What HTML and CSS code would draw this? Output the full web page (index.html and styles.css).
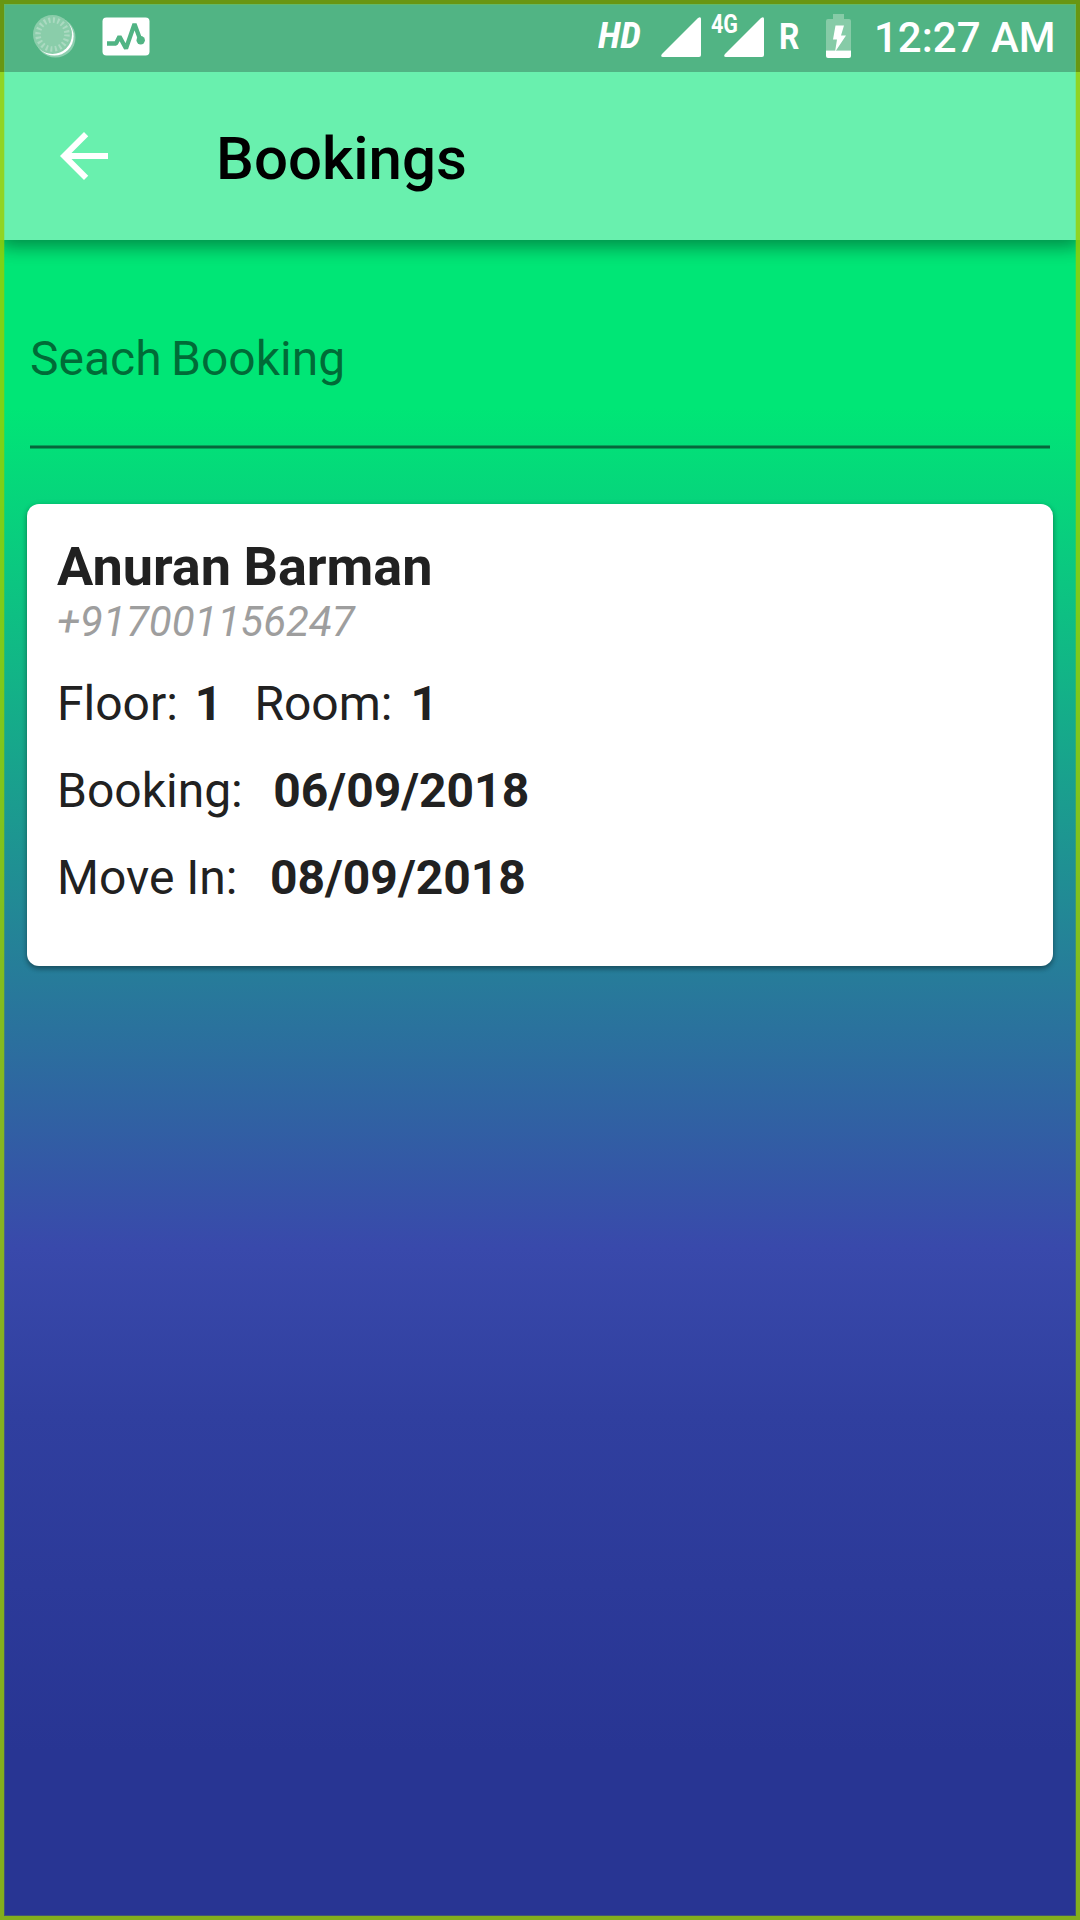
FILE: index.html
```html
<!DOCTYPE html>
<html lang="en">
<head>
<meta charset="utf-8">
<title>Bookings</title>
<link rel="stylesheet" href="styles.css">
</head>
<body>
<div class="screen">
  <header class="top">
    <div class="status">
      <svg class="sync" width="44" height="46" viewBox="0 0 44 46">
        <circle cx="22.500" cy="23.500" r="20" fill="#fff" fill-opacity=".35"/>
        <circle cx="21.300" cy="22.300" r="19.300" fill="#fff"/>
        <circle cx="19.500" cy="20.500" r="19.500" fill="#8acdaa"/>
        <circle cx="19.500" cy="20.500" r="14.500" fill="none" stroke="#abdac1" stroke-width="5.500" stroke-dasharray="2 2.555"/>
      </svg>
      <svg class="pulse" width="48" height="39" viewBox="0 0 48 39">
        <rect x=".5" y=".5" width="47" height="38" rx="4" fill="#fff"/>
        <path d="M5 26.500H14L17.500 19.500L24 31.500L32.500 7L38 22" fill="none" stroke="#51b484" stroke-width="4.300" stroke-linejoin="bevel"/>
        <circle cx="38.700" cy="23.300" r="4.200" fill="#51b484"/>
      </svg>
      <span class="hd">HD</span>
      <svg class="signal" width="40" height="40" viewBox="0 0 40 40"><path d="M2 40H38Q40 40 40 38V2Q40-1 37 1L1 37Q-1 40 2 40Z" fill="#fff"/></svg>
      <div class="mobile">
        <svg class="signal" width="40" height="40" viewBox="0 0 40 40"><path d="M2 40H38Q40 40 40 38V2Q40-1 37 1L1 37Q-1 40 2 40Z" fill="#fff"/></svg>
        <span class="network">4G</span>
      </div>
      <span class="roaming">R</span>
      <svg class="battery" width="25" height="44" viewBox="0 0 25 44">
        <path d="M7 0H18V5H23Q25 5 25 7V36.500H0V7Q0 5 2 5H7Z" fill="#86cba7"/>
        <path d="M0 36.500H25V42Q25 44 23 44H2Q0 44 0 42Z" fill="#fff"/>
        <path d="M9.500 11.500H18L15 21.500H20L9 38L11 25.500H7Z" fill="#fff"/>
      </svg>
      <time class="clock">12:27 AM</time>
    </div>
    <div class="appbar">
      <svg class="back" width="48" height="48" viewBox="4 4 16 16"><path d="M20 11H7.830l5.590-5.590L12 4l-8 8 8 8 1.410-1.410L7.830 13H20v-2z" fill="#fff"/></svg>
      <h1 class="title">Bookings</h1>
    </div>
  </header>
  <main class="content">
    <div class="search">Seach Booking</div>
    <article class="card">
      <h2 class="name">Anuran Barman</h2>
      <p class="phone">+917001156247</p>
      <p class="row"><span>Floor:</span><b class="floor">1</b><span class="room-label">Room:</span><b class="room">1</b></p>
      <p class="row"><span>Booking:</span><b class="booked">06/09/2018</b></p>
      <p class="row"><span>Move In:</span><b class="move-in">08/09/2018</b></p>
    </article>
  </main>
  <div class="frame"></div>
</div>
</body>
</html>
```
FILE: styles.css
```css
*, *::before { box-sizing: border-box; }
body { margin: 0; font-family: Roboto, sans-serif; color: #212121; }
h1, h2, p { margin: 0; }
.screen {
  position: relative;
  width: 1080px;
  height: 1920px;
  overflow: hidden;
  background: linear-gradient(#00e676 0, #00e676 408px, #3949ab 1248px, #303f9f 1416px, #283593 1752px);
}
.top {
  background: #69f0ae;
  height: 240px;
  box-shadow: 0 7px 17px rgba(0, 0, 0, .28), 0 3px 20px rgba(0, 0, 0, .18);
}
.status {
  display: flex;
  height: 72px;
  background: #51b484;
  color: #fff;
}
.status svg { display: block; flex: none; }
.sync { margin: 14px 0 0 33px; }
.pulse { margin: 17px 0 0 25px; }
.hd {
  width: 46px;
  margin: 15px 0 0 448px;
  font: italic 700 36px/42px "Roboto Condensed", Roboto, sans-serif;
  transform: scaleX(1.04);
  transform-origin: left;
}
.signal { margin-top: 17px; }
.hd + .signal { margin-left: 17px; }
.mobile { position: relative; margin-left: 23px; }
.network {
  position: absolute;
  left: -13px;
  top: 13px;
  font: 700 25px/24px Roboto, sans-serif;
  transform: scaleX(.86);
  transform-origin: left;
}
.roaming {
  width: 24px;
  margin: 16px 0 0 15px;
  font: 700 37px/42px Roboto, sans-serif;
  transform: scaleX(.86);
  transform-origin: left;
}
.battery { margin: 14px 0 0 23px; }
.clock {
  margin: 13px 0 0 23px;
  font-size: 42px;
  line-height: 50px;
  font-weight: 500;
  white-space: nowrap;
}
.appbar {
  display: flex;
  align-items: center;
  height: 168px;
  padding-left: 60px;
}
.title {
  margin-left: 108px;
  padding-top: 6px;
  font-size: 60px;
  line-height: 70px;
  font-weight: 500;
  color: #000;
}
.content { padding: 0 27px; }
.search {
  height: 209px;
  margin: 0 3px 55px;
  padding-top: 91px;
  font-size: 48px;
  line-height: 56px;
  word-spacing: -2.500px;
  color: rgba(0, 0, 0, .54);
  background: linear-gradient(#05a159 1px, #06663b 1px, #06663b 3px, #05a159 3px) bottom / 100% 4px no-repeat;
}
.card {
  height: 462px;
  padding: 33px 30px;
  background: #fff;
  border-radius: 12px;
  box-shadow: 0 3px 5px rgba(0, 0, 0, .3), 0 1px 6px rgba(0, 0, 0, .14);
}
.name { font-size: 54px; line-height: 60px; font-weight: 700; word-spacing: -1px; }
.phone { font-size: 42px; line-height: 50px; font-style: italic; color: #9e9e9e; }
.row {
  display: flex;
  margin-top: 28px;
  font-size: 48px;
  line-height: 59px;
}
.phone + .row { margin-top: 27px; }
.floor { margin-left: 17px; }
.room-label { margin-left: 32px; }
.room { margin-left: 18px; }
.booked { margin-left: 30.500px; }
.move-in { margin-left: 32.500px; }
.frame {
  position: absolute;
  inset: 0;
  border: 4px solid rgba(154, 205, 0, .8);
  box-shadow: inset 0 0 0 1px rgba(154, 205, 0, .22);
}
/* The status bar scrim also dims the top of the frame. */
.frame::before {
  content: "";
  position: absolute;
  inset: -4px -4px auto;
  height: 72px;
  border: 4px solid rgba(0, 0, 0, .25);
  border-bottom: 0;
}
```
